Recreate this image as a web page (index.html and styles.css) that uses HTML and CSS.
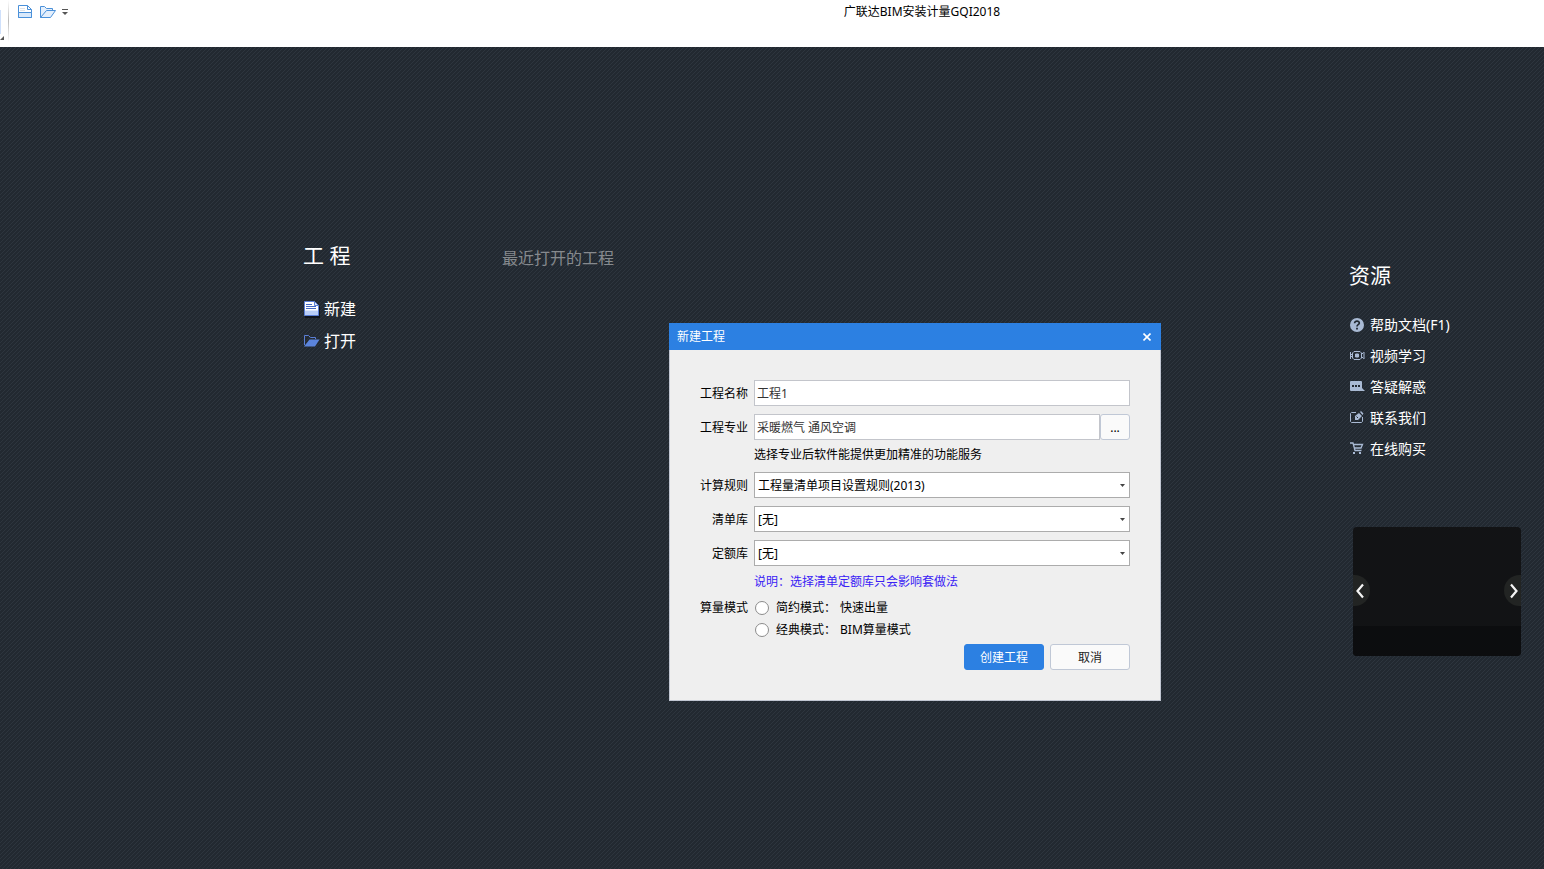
FILE: index.html
```html
<!DOCTYPE html>
<html lang="zh-CN">
<head>
<meta charset="utf-8">
<meta name="viewport" content="width=device-width, initial-scale=1">
<title>广联达BIM安装计量GQI2018</title>
<link rel="stylesheet" href="styles.css">
</head>
<body>
<header class="titlebar">
  <div class="app-corner">
    <span class="app-tile"></span>
    <svg class="corner-mark" width="4" height="4" viewBox="0 0 4 4"><path d="M4 0v4H0z" fill="#555"/></svg>
  </div>
  <div class="quick-tools">
    <button class="tool" type="button" aria-label="新建">
      <svg width="16" height="16" viewBox="0 0 16 16" fill="#fff" stroke="#4a90d9"><path d="M1.500 1.500H10.500L14.500 5.500V13.500H1.500Z"/><path d="M1.500 8.500H14.500V13.500H1.500Z" fill="#d9e9fb"/><path d="M10.500 1.500V5.500H14.500" fill="none"/><path d="M3 4.500H8M3 6.500H8" stroke="#dfe3e8"/></svg>
    </button>
    <button class="tool" type="button" aria-label="打开">
      <svg width="17" height="16" viewBox="0 0 17 16" fill="#e4effc" stroke="#4a90d9" stroke-linejoin="round"><path d="M1.500 13.500V2.500H5.500L7.500 4.500H13.500V6.500L1.500 13.500"/><path d="M1.500 13.500L7.500 6.500H16.500L11.500 13.500Z"/></svg>
    </button>
    <button class="tool tool-more" type="button" aria-label="更多">
      <svg width="6" height="8" viewBox="0 0 6 8"><path d="M0 1.500H6" stroke="#555"/><path d="M0 4H6L3 7Z" fill="#555"/></svg>
    </button>
  </div>
  <h1 class="title">广联达BIM安装计量GQI2018</h1>
</header>

<main class="start">
  <nav class="project" aria-label="工程">
    <h2 class="heading">工 程</h2>
    <a class="project-link" href="#new">
      <svg width="17" height="17" viewBox="0 0 17 17"><path d="M2 2H12L17 6V17H2Z" fill="#10141c"/><path d="M1.500.5H11.500L15.500 4.500V14.500H1.500Z" fill="#fff" stroke="#5b7fd6"/><path d="M2 9.500H15V14H2Z" fill="#b8cdf8"/><path d="M11.500 1V4.500H15" fill="#dce6fc" stroke="#5b7fd6"/><path d="M3 3.500H9M3 5.500H13M3 7.500H13" stroke="#4468c4"/></svg>
      <span>新建</span>
    </a>
    <a class="project-link" href="#open">
      <svg width="17" height="17" viewBox="0 0 17 17"><path d="M1.500 12V2.500H5.500L7.500 4.500H12.500V6" fill="none" stroke="#5b7fd6"/><path d="M1 13.500L6.500 6.500H16.500L12 13.500Z" fill="#5b84dc"/></svg>
      <span>打开</span>
    </a>
  </nav>
  <section class="recent">
    <h2 class="recent-heading">最近打开的工程</h2>
  </section>
  <aside class="resources">
    <h2 class="heading">资源</h2>
    <ul class="resource-list">
      <li><a class="resource-link" href="#help">
        <svg width="16" height="16" viewBox="0 0 16 16"><circle cx="8" cy="8" r="7" fill="#a9bad4"/><path d="M5.600 6.300C5.600 3.200 10.500 3.400 10.300 6.200C10.200 7.700 8 7.700 8 9.500" fill="none" stroke="#222931" stroke-width="1.700"/><path d="M7.100 10.700H8.900V12.400H7.100Z" fill="#222931"/></svg>
        <span>帮助文档(F1)</span></a></li>
      <li><a class="resource-link" href="#video">
        <svg width="16" height="16" viewBox="0 0 16 16" fill="none" stroke="#a9bad4"><path d="M1.500 4V11M5 3.500H11L12.500 5V10L11 11.500H5L3.500 10V5ZM1.500 5.500L3.500 7.500 1.500 9.500M12.500 6.500L14.500 4.500M12.500 8.500L14.500 10.500M15 4V11"/><path d="M6.500 6H9.500V9H6.500Z" fill="#a9bad4"/></svg>
        <span>视频学习</span></a></li>
      <li><a class="resource-link" href="#answers">
        <svg width="16" height="16" viewBox="0 0 16 16"><path d="M2 2H12Q13 2 13 3V9L16 12H2Q1 12 1 11V3Q1 2 2 2Z" fill="#a9bad4"/><path d="M3 6H5V8H3ZM6 6H8V8H6ZM9 6H11V8H9Z" fill="#222931"/></svg>
        <span>答疑解惑</span></a></li>
      <li><a class="resource-link" href="#contact">
        <svg width="16" height="16" viewBox="0 0 16 16"><path d="M7 2.500H2.500L1.500 3.500V11.500L2.500 12.500H12.500L13.500 11.500V7" fill="none" stroke="#a9bad4"/><path d="M6 6V10H9L13 6 10 3ZM11 2L12 1 14.500 3.500 13.500 5Z" fill="#a9bad4"/><path d="M7.500 6.500L9 8" stroke="#222931"/></svg>
        <span>联系我们</span></a></li>
      <li><a class="resource-link" href="#buy">
        <svg width="16" height="16" viewBox="0 0 16 16" fill="none" stroke="#a9bad4"><path d="M1 2H4L6 9.500H12.500M4.500 3.500H13.500L12 7H5.500" stroke-width="1.300"/><path d="M4 11H6V13H4ZM10 11H12V13H10Z" fill="#a9bad4" stroke="none"/></svg>
        <span>在线购买</span></a></li>
    </ul>
    <div class="carousel">
      <div class="slides">
        <button class="slide slide-prev" type="button" aria-label="上一张"><svg width="10" height="16" viewBox="0 0 10 16"><path d="M8 1.500L2.500 8 8 14.500" fill="none" stroke="#f4f4f4" stroke-width="2.200"/></svg></button>
        <button class="slide slide-next" type="button" aria-label="下一张"><svg width="10" height="16" viewBox="0 0 10 16"><path d="M2 1.500L7.500 8 2 14.500" fill="none" stroke="#f4f4f4" stroke-width="2.200"/></svg></button>
      </div>
      <div class="caption"></div>
    </div>
  </aside>

  <section class="dialog" role="dialog" aria-labelledby="dialog-title">
    <header class="dialog-head">
      <h2 class="dialog-title" id="dialog-title">新建工程</h2>
      <button class="close" type="button" aria-label="关闭"><svg width="8" height="8" viewBox="0 0 8 8"><path d="M.5.5L7.500 7.500M7.500.5L.5 7.500" stroke="#fff" stroke-width="1.600"/></svg></button>
    </header>
    <form class="form">
      <div class="row">
        <label class="label" for="name">工程名称</label>
        <input class="field" id="name" type="text" value="工程1">
      </div>
      <div class="row">
        <label class="label" for="major">工程专业</label>
        <input class="field" id="major" type="text" value="采暖燃气 通风空调">
        <button class="browse" type="button" aria-label="选择专业">...</button>
      </div>
      <p class="note">选择专业后软件能提供更加精准的功能服务</p>
      <div class="row">
        <label class="label" for="rule">计算规则</label>
        <select class="field select" id="rule"><option>工程量清单项目设置规则(2013)</option></select>
      </div>
      <div class="row">
        <label class="label" for="list">清单库</label>
        <select class="field select" id="list"><option>[无]</option></select>
      </div>
      <div class="row">
        <label class="label" for="quota">定额库</label>
        <select class="field select" id="quota"><option>[无]</option></select>
      </div>
      <p class="note note-info">说明<span class="colon">：</span>选择清单定额库只会影响套做法</p>
      <div class="modes" role="radiogroup" aria-labelledby="mode-label">
        <span class="label" id="mode-label">算量模式</span>
        <div class="mode-options">
          <label class="mode"><input class="radio" type="radio" name="mode"><span>简约模式<span class="colon">：</span></span><span>快速出量</span></label>
          <label class="mode"><input class="radio" type="radio" name="mode"><span>经典模式<span class="colon">：</span></span><span>BIM算量模式</span></label>
        </div>
      </div>
      <div class="actions">
        <button class="button button-primary" type="button">创建工程</button>
        <button class="button" type="button">取消</button>
      </div>
    </form>
  </section>
</main>
</body>
</html>
```
FILE: styles.css
```css
* { box-sizing: border-box; }

body {
  margin: 0;
  min-height: 100vh;
  display: flex;
  flex-direction: column;
  background: #fff;
  color: #000;
  font: 12px/18px "Noto Sans", "Noto Sans CJK SC", sans-serif;
}

h1, h2, p, ul { margin: 0; padding: 0; font-weight: 400; }
ul { list-style: none; }
a { color: inherit; text-decoration: none; }
svg { display: block; flex: none; }
button, input, select { font: inherit; color: inherit; margin: 0; padding: 0; }
button { border: 0; background: none; }

/* Full-width colon centred in its cell */
.colon { font-family: "Noto Sans CJK TC", sans-serif; line-height: 1; }

/* Title bar */
.titlebar {
  display: grid;
  grid-template-columns: 1fr auto 1fr;
  align-items: start;
  height: 47px;
  position: relative;
}
.app-corner {
  position: absolute;
  left: 0;
  top: 0;
  width: 9px;
  height: 42px;
  background: linear-gradient(#fff, #bbb 50%, #fff) no-repeat right / 1px 100%;
}
.app-tile {
  display: block;
  width: 1px;
  height: 24px;
  margin-top: 10px;
  background: #cfe0fb;
}
.corner-mark { margin-top: 2px; }
.quick-tools {
  display: flex;
  align-items: center;
  gap: 6px;
  padding: 4px 0 0 17px;
}
.title {
  grid-column: 2;
  grid-row: 1;
  padding-top: 3px;
  margin-left: 300px;
  font-size: 12px;
}

/* Start page */
.start {
  flex: 1;
  position: relative;
  display: grid;
  grid-template-columns: 199px 1fr 195px;
  padding-left: 303px;
  background: #222931 url("data:image/svg+xml,%3Csvg xmlns='http://www.w3.org/2000/svg' width='4' height='4' shape-rendering='crispEdges'%3E%3Cpath d='M3 0h1v1H3zM2 1h1v1H2zM1 2h1v1H1zM0 3h1v1H0z' fill='%232d353e'/%3E%3C/svg%3E");
  color: #fff;
}
.project { padding-top: 192px; }
.heading { font-size: 21px; line-height: 32px; }
.project .heading { margin-bottom: 22px; }
.project-link {
  display: flex;
  align-items: center;
  gap: 4px;
  font-size: 16px;
  line-height: 32px;
}
.recent { padding-top: 199px; }
.recent-heading { color: #868a8e; font-size: 16px; line-height: 24px; }
.resources { padding-top: 212px; }
.resource-list { margin-top: 18px; }
.resource-link {
  display: flex;
  align-items: center;
  gap: 5px;
  font-size: 14px;
  line-height: 31px;
}
.carousel {
  display: flex;
  flex-direction: column;
  height: 129px;
  margin: 63px 23px 0 4px;
  overflow: hidden;
  border-radius: 4px;
  background: #121315;
}
.slides {
  flex: 1;
  display: flex;
  justify-content: space-between;
  align-items: flex-end;
  padding-bottom: 20px;
}
.slide {
  display: flex;
  align-items: center;
  width: 17px;
  height: 31px;
  padding: 0 2px;
  background: #222423;
}
.slide-prev { border-radius: 0 16px 16px 0; }
.slide-next { justify-content: flex-end; border-radius: 16px 0 0 16px; }
.caption { height: 30px; background: #0c0d0f; }

/* New project dialog */
.dialog {
  position: absolute;
  left: 669px;
  top: 276px;
  width: 492px;
  border: 1px solid #c0c6d2;
  border-top: 0;
  background: #efefef;
  color: #000;
}
.dialog-head {
  display: flex;
  align-items: center;
  justify-content: space-between;
  height: 27px;
  margin: 0 -1px;
  padding: 0 4px 0 8px;
  background: #2c80e2;
  color: #fff;
}
.dialog-title { font-size: 12px; }
.close { display: grid; place-items: center; width: 20px; height: 20px; }
.form { padding: 30px; }
.row { display: flex; align-items: center; margin-bottom: 8px; }
.label { flex: none; width: 48px; margin-right: 6px; text-align: right; }
.row .label { padding-top: 2px; }
.field {
  flex: 1;
  min-width: 0;
  height: 26px;
  padding: 0 2px;
  border: 1px solid #c3c5cb;
  border-radius: 0;
  background: #fff;
  color: #333;
}
.select {
  appearance: none;
  padding: 2px 16px 0 3px;
  border-color: #acacac;
  color: #000;
  background: #fff url("data:image/svg+xml,%3Csvg xmlns='http://www.w3.org/2000/svg' width='5' height='3'%3E%3Cpath d='M0 0h5L2.500 3z' fill='%23444'/%3E%3C/svg%3E") no-repeat right 4px center;
}
.browse {
  width: 30px;
  height: 26px;
  padding-top: 2px;
  border: 1px solid #c0c8d6;
  border-radius: 3px;
  background: #fafafa;
}
.note { margin: -8px 0 2px 54px; line-height: 30px; }
.note-info { margin: -7px 0 0 54px; }
.note-info { color: #3a22f5; }
.modes { display: flex; line-height: 22px; }
.mode { display: flex; align-items: center; gap: 4px; }
.radio {
  appearance: none;
  width: 14px;
  height: 14px;
  margin: 0 3px 0 1px;
  border: 1px solid #8c8c8c;
  border-radius: 50%;
  background: #fff;
}
.actions { display: flex; justify-content: flex-end; gap: 6px; margin-top: 3px; }
.button {
  width: 80px;
  height: 26px;
  padding-top: 1px;
  border: 1px solid #c0c8d6;
  border-radius: 3px;
  background: #fafafa;
  color: #222;
}
.button-primary { border-color: #2c80e2; background: #2c80e2; color: #fff; }
```
